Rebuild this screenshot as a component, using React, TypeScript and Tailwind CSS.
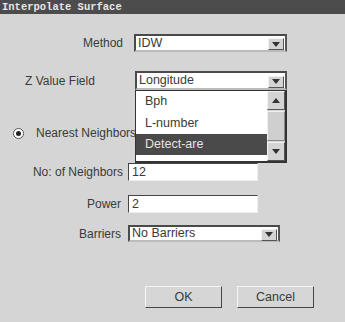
import { ReactNode } from "react";

const sans = { fontFamily: '"Liberation Sans", Arial, sans-serif' };

function Arrow({ up = false }: { up?: boolean }) {
  return (
    <svg width="8" height="5" viewBox="0 0 8 5">
      <path d={up ? "M0 5 L4 0 L8 5 Z" : "M0 0 L8 0 L4 5 Z"} fill="#333" />
    </svg>
  );
}

function DropButton({ up = false, className = "" }: { up?: boolean; className?: string }) {
  return (
    <div
      className={`flex items-center justify-center bg-[#d4d4d4] border border-t-[#f2f2f2] border-l-[#f2f2f2] border-b-[#555] border-r-[#555] ${className}`}
    >
      <Arrow up={up} />
    </div>
  );
}

function Combo({ value, width, height }: { value: string; width: string; height: string }) {
  return (
    <div
      className={`${width} ${height} flex items-center bg-white border-2 border-t-[#4a4a4a] border-l-[#4a4a4a] border-b-[#bbb] border-r-[#555] pl-[2px] pr-[1px]`}
    >
      <span className="flex-1 text-[12.5px] text-[#3a3a3a] leading-none">{value}</span>
      <DropButton className="w-[16px] h-[12px] mt-[2px]" />
    </div>
  );
}

function TextBox({ value }: { value: string }) {
  return (
    <div className="w-[130px] h-[18px] flex items-center bg-white border border-t-[#444] border-l-[#444] border-b-[#eee] border-r-[#eee] pl-[3px]">
      <span className="text-[12.5px] text-[#3a3a3a] leading-none">{value}</span>
    </div>
  );
}

function Label({ children, width }: { children: ReactNode; width: string }) {
  return <div className={`${width} text-right text-[12px] text-[#3a3a3a] leading-none`}>{children}</div>;
}

function Button({ children }: { children: ReactNode }) {
  return (
    <div className="w-[77px] h-[22px] flex items-center justify-center bg-[#d6d6d6] border border-t-[#f4f4f4] border-l-[#f4f4f4] border-b-[#444] border-r-[#444] text-[12.5px] text-[#3a3a3a]">
      {children}
    </div>
  );
}

export default function App() {
  return (
    <div className="w-[345px] h-[322px] bg-[#d5d5d5] flex flex-col overflow-hidden" style={sans}>
      {/* Title bar */}
      <div className="h-[14px] bg-[#4c4c4c] flex items-center pl-[2px]">
        <span
          className="text-[10.5px] text-[#e6e6e6] font-bold leading-none"
          style={{ fontFamily: '"Liberation Mono", "DejaVu Sans Mono", monospace' }}
        >
          Interpolate Surface
        </span>
      </div>

      {/* Method */}
      <div className="mt-[20px] flex items-center h-[18px]">
        <Label width="w-[123px]">Method</Label>
        <div className="ml-[11px]">
          <Combo value="IDW" width="w-[153px]" height="h-[18px]" />
        </div>
      </div>

      {/* Z Value Field */}
      <div className="mt-[19px] flex items-center h-[19px] relative z-10">
        <div className="pl-[25px] w-[135px] text-[12px] text-[#3a3a3a] leading-none">Z Value Field</div>
        <div className="relative">
          <Combo value="Longitude" width="w-[152px]" height="h-[19px]" />
          {/* Open list */}
          <div className="absolute left-0 top-[19px] w-[152px] h-[73px] bg-white border border-[#333] border-r-2 border-b-2 flex">
            <div className="flex-1 flex flex-col">
              <div className="h-[21px] flex items-center pl-[9px] text-[12.5px] text-[#3a3a3a]">Bph</div>
              <div className="h-[22px] flex items-center pl-[9px] text-[12.5px] text-[#3a3a3a]">L-number</div>
              <div className="h-[21px] flex items-center pl-[9px] text-[12.5px] text-[#e4e4e4] bg-[#4a4a4a]">
                Detect-are
              </div>
            </div>
            <div className="w-[18px] flex flex-col bg-[#d8d8d8]">
              <DropButton up className="h-[19px]" />
              <div className="flex-1 bg-[#cfcfcf] border border-t-[#f0f0f0] border-l-[#f0f0f0] border-b-[#888] border-r-[#888] my-[1px]" />
              <DropButton className="h-[19px]" />
            </div>
          </div>
        </div>
      </div>

      {/* Nearest Neighbors radio */}
      <div className="mt-[36px] h-[14px] flex items-center pl-[13px]">
        <div className="w-[11px] h-[11px] rounded-full bg-white border border-[#555] flex items-center justify-center">
          <div className="w-[5px] h-[5px] rounded-full bg-[#222]" />
        </div>
        <span className="ml-[12px] text-[12px] text-[#3a3a3a] leading-none">Nearest Neighbors</span>
      </div>

      {/* No: of Neighbors */}
      <div className="mt-[23px] flex items-center h-[18px]">
        <Label width="w-[123px]">No: of Neighbors</Label>
        <div className="ml-[5px]">
          <TextBox value="12" />
        </div>
      </div>

      {/* Power */}
      <div className="mt-[14px] flex items-center h-[18px]">
        <Label width="w-[121px]">Power</Label>
        <div className="ml-[7px]">
          <TextBox value="2" />
        </div>
      </div>

      {/* Barriers */}
      <div className="mt-[12px] flex items-center h-[17px]">
        <Label width="w-[121px]">Barriers</Label>
        <div className="ml-[7px]">
          <Combo value="No Barriers" width="w-[152px]" height="h-[17px]" />
        </div>
      </div>

      {/* Buttons */}
      <div className="mt-[44px] flex pl-[145px] gap-[15px]">
        <Button>OK</Button>
        <Button>Cancel</Button>
      </div>
    </div>
  );
}
